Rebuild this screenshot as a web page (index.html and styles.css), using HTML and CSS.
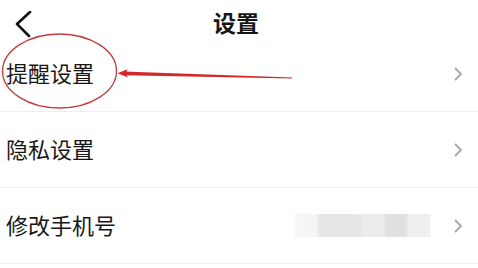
FILE: index.html
```html
<!DOCTYPE html>
<html lang="zh-CN">
<head>
<meta charset="utf-8">
<title>设置</title>
<link rel="stylesheet" href="styles.css">
</head>
<body>
<div class="page">
  <header class="header">
    <div class="back">
      <svg width="20" height="30" viewBox="0 0 20 30"><polyline points="16,1 3,13 15,25" fill="none" stroke="#111" stroke-width="2.6" stroke-linecap="round" stroke-linejoin="round"/></svg>
    </div>
    <h1 class="title">设置</h1>
    <div class="spacer"></div>
  </header>
  <ul class="list">
    <li class="row">
      <span class="label">提醒设置</span>
      <span class="fill"></span>
      <svg class="chev" width="9" height="14" viewBox="0 0 9 14"><polyline points="1.5,1.5 7,7 1.5,12.5" fill="none" stroke="#a8a8a8" stroke-width="1.8" stroke-linecap="round" stroke-linejoin="round"/></svg>
    </li>
    <li class="row">
      <span class="label">隐私设置</span>
      <span class="fill"></span>
      <svg class="chev" width="9" height="14" viewBox="0 0 9 14"><polyline points="1.5,1.5 7,7 1.5,12.5" fill="none" stroke="#a8a8a8" stroke-width="1.8" stroke-linecap="round" stroke-linejoin="round"/></svg>
    </li>
    <li class="row">
      <span class="label">修改手机号</span>
      <span class="fill"></span>
      <span class="mask"></span>
      <svg class="chev" width="9" height="14" viewBox="0 0 9 14"><polyline points="1.5,1.5 7,7 1.5,12.5" fill="none" stroke="#a8a8a8" stroke-width="1.8" stroke-linecap="round" stroke-linejoin="round"/></svg>
    </li>
  </ul>
  <svg class="annot" width="478" height="268" viewBox="0 0 478 268">
    <ellipse cx="59.5" cy="71" rx="57" ry="37" fill="none" stroke="#c23a3e" stroke-width="1.3"/>
    <polygon points="124,71.4 292,77.4 292,78.6 124,75.2" fill="#d2282b"/>
    <polygon points="117.5,73.3 127.5,69.3 126,73.3 127.5,77.3" fill="#d2282b"/>
  </svg>
</div>
</body>
</html>
```

FILE: styles.css
```css
* { box-sizing: border-box; }
html, body {
  margin: 0;
  padding: 0;
  background: #ffffff;
}
body {
  font-family: "Noto Sans CJK SC", "Noto Sans", sans-serif;
  color: #161616;
}
.page {
  position: relative;
  width: 478px;
  height: 268px;
  overflow: hidden;
}
.header {
  height: 36px;
  display: grid;
  grid-template-columns: 1fr auto 1fr;
  align-items: start;
}
.back {
  padding-left: 14px;
  padding-top: 11px;
  height: 36px;
}
.back svg { display: block; }
.title {
  margin: 0;
  font-size: 23px;
  font-weight: 700;
  line-height: 1;
  padding-right: 6px;
  padding-top: 11px;
}
.list {
  list-style: none;
  margin: 0;
  padding: 0;
}
.row {
  height: 76px;
  border-bottom: 1px solid #efefef;
  display: flex;
  align-items: center;
  padding-left: 6px;
  padding-right: 15px;
}
.label {
  font-size: 22px;
  line-height: 1;
  padding-bottom: 3px;
}
.fill { flex: 1; }
.mask {
  width: 137px;
  height: 29px;
  margin-right: 23px;
  background:
    linear-gradient(to right,
      #f7f7f7 0, #f5f5f5 24px,
      #e6e6e6 24px, #e7e7e7 68px,
      #ececec 68px, #ececec 91px,
      #e0e0e0 91px, #e0e0e0 113px,
      #eeeeee 113px, #f0f0f0 137px);
  filter: blur(1.2px);
  clip-path: inset(3px 0 3px 0);
}
.chev { display: block; }
.annot {
  position: absolute;
  left: 0;
  top: 0;
  pointer-events: none;
}
```
